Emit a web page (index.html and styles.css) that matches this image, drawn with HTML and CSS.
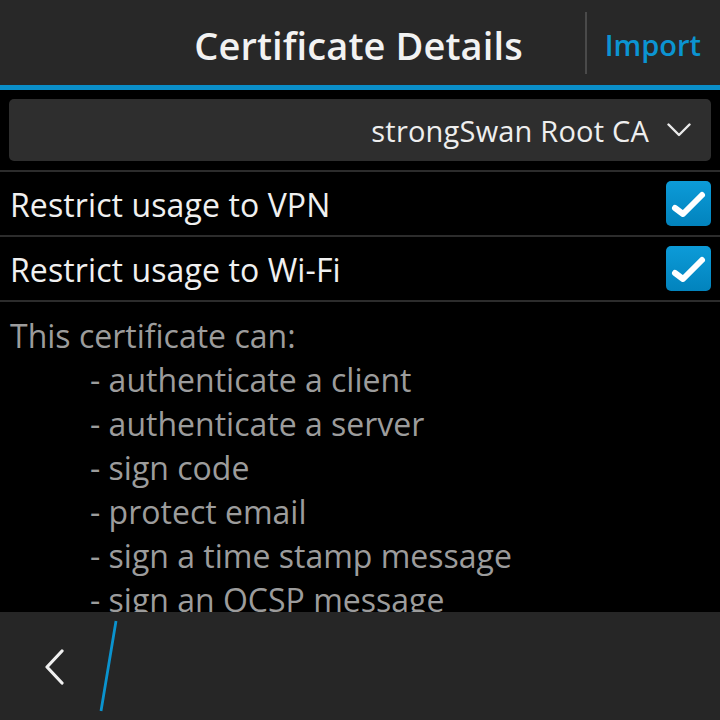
FILE: index.html
```html
<!DOCTYPE html>
<html>
<head>
<meta charset="utf-8">
<link rel="stylesheet" href="styles.css">
</head>
<body>
<div class="screen">
  <header class="titlebar">
    <div class="title">Certificate Details</div>
    <div class="divider"></div>
    <div class="action">Import</div>
  </header>
  <main class="content">
    <div class="dropdown">
      <span class="dd-text">strongSwan Root CA</span>
      <svg class="dd-chev" width="24" height="14" viewBox="0 0 24 14"><polyline points="1.5,1.5 12,12 22.5,1.5" fill="none" stroke="#eaeaea" stroke-width="2.4" stroke-linejoin="round" stroke-linecap="round"/></svg>
    </div>
    <div class="sep"></div>
    <div class="row">
      <span class="row-label">Restrict usage to VPN</span>
      <span class="check"><svg width="45" height="45" viewBox="0 0 45 45"><polyline points="9,27 17,33 36,14" fill="none" stroke="#fff" stroke-width="6" stroke-linecap="round" stroke-linejoin="round"/></svg></span>
    </div>
    <div class="sep"></div>
    <div class="row">
      <span class="row-label">Restrict usage to Wi-Fi</span>
      <span class="check"><svg width="45" height="45" viewBox="0 0 45 45"><polyline points="9,27 17,33 36,14" fill="none" stroke="#fff" stroke-width="6" stroke-linecap="round" stroke-linejoin="round"/></svg></span>
    </div>
    <div class="sep"></div>
    <div class="info">
      <div class="info-line">This certificate can:</div>
      <div class="info-item">- authenticate a client</div>
      <div class="info-item">- authenticate a server</div>
      <div class="info-item">- sign code</div>
      <div class="info-item">- protect email</div>
      <div class="info-item">- sign a time stamp message</div>
      <div class="info-item">- sign an OCSP message</div>
    </div>
  </main>
  <footer class="actionbar">
    <svg class="back" width="20" height="36" viewBox="0 0 20 36"><polyline points="17,2 2,18 17,34" fill="none" stroke="#f0f0f0" stroke-width="3.2" stroke-linecap="round" stroke-linejoin="round"/></svg>
    <svg class="slash" width="20" height="92" viewBox="0 0 20 92"><line x1="17" y1="1" x2="2" y2="91" stroke="#0a93cf" stroke-width="2.8"/></svg>
  </footer>
</div>
</body>
</html>
```
FILE: styles.css
```css
* { box-sizing: border-box; }
html, body { margin: 0; padding: 0; background: #000; }
body { font-family: "Open Sans", "Noto Sans", sans-serif; }
.screen { width: 720px; height: 720px; display: flex; flex-direction: column; overflow: hidden; background: #000; }

.titlebar {
  height: 90px;
  flex: none;
  background: #282828;
  border-bottom: 5px solid #0a8fc9;
  display: flex;
  align-items: center;
  padding-right: 19px;
}
.title {
  flex: 1;
  text-align: right;
  padding-right: 62px;
  color: #f2f2f2;
  font-size: 38px;
  font-weight: 600;
  letter-spacing: 0.1px;
  padding-top: 4px;
}
.divider { width: 2px; height: 62px; background: #4a4a4a; }
.action {
  margin-left: 18px;
  color: #0b94d2;
  font-size: 29px;
  font-weight: 600;
  padding-top: 4px;
}

.content { flex: 1; overflow: hidden; display: flex; flex-direction: column; }
.dropdown {
  flex: none;
  margin: 9px 9px 9px 9px;
  height: 62px;
  background: #2e2e2e;
  border-radius: 5px;
  display: flex;
  align-items: center;
  justify-content: flex-end;
  padding-right: 20px;
  gap: 18px;
}
.dd-text { color: #eeeeee; font-size: 29px; letter-spacing: 0.2px; }
.dd-chev { display: block; }
.sep { flex: none; height: 2px; background: #2c2c2c; }
.row {
  flex: none;
  height: 63px;
  display: flex;
  align-items: center;
  justify-content: space-between;
  padding: 0 9px 0 10px;
}
.row-label { color: #f0f0f0; font-size: 32px; letter-spacing: 0.1px; padding-top: 2px; }
.check {
  width: 45px; height: 45px;
  border-radius: 5px;
  background: linear-gradient(#0c9bd8, #0283bd);
  display: block;
}
.check svg { display: block; }

.info { padding: 12px 10px 0 10px; color: #9c9c9c; font-size: 32px; line-height: 44px; }
.info-item { padding-left: 80px; }

.actionbar {
  height: 108px;
  flex: none;
  background: #262626;
  display: flex;
  align-items: center;
  padding-left: 45px;
}
.back { display: block; margin-top: 2px; }
.slash { display: block; margin-left: 34px; }
```
